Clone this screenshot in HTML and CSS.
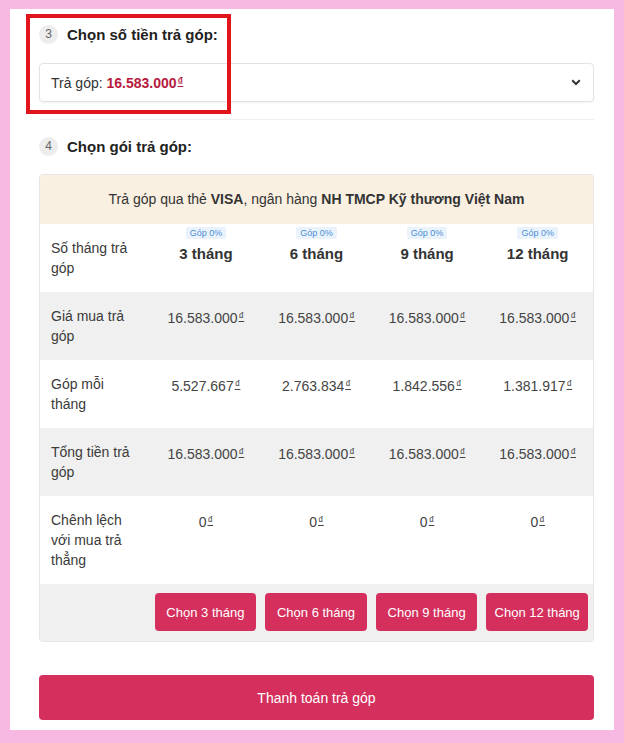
FILE: index.html
```html
<!DOCTYPE html>
<html lang="vi">
<head>
<meta charset="utf-8">
<link rel="stylesheet" href="styles.css">
</head>
<body>
<div class="panel">
  <div class="highlight"></div>
  <div class="step">
    <span class="num">3</span>
    <span class="step-title">Chọn số tiền trả góp:</span>
  </div>
  <div class="select">
    <span>Trả góp: <b class="amount">16.583.000<span class="cur">₫</span></b></span>
    <svg class="chev" width="10" height="7" viewBox="0 0 10 7"><path d="M1.2 1.3 L5 5 L8.8 1.3" fill="none" stroke="#333" stroke-width="2"/></svg>
  </div>
  <div class="sep"></div>
  <div class="step">
    <span class="num">4</span>
    <span class="step-title">Chọn gói trả góp:</span>
  </div>
  <div class="plan">
    <div class="plan-head">Trả góp qua thẻ <b>VISA</b>, ngân hàng <b>NH TMCP Kỹ thương Việt Nam</b></div>
    <div class="row">
      <div class="label">Số tháng trả góp</div>
      <div class="month"><span class="tag">Góp 0%</span><div class="m">3 tháng</div></div>
      <div class="month"><span class="tag">Góp 0%</span><div class="m">6 tháng</div></div>
      <div class="month"><span class="tag">Góp 0%</span><div class="m">9 tháng</div></div>
      <div class="month"><span class="tag">Góp 0%</span><div class="m">12 tháng</div></div>
    </div>
    <div class="row gray">
      <div class="label">Giá mua trả góp</div>
      <div class="val">16.583.000<span class="cur">₫</span></div>
      <div class="val">16.583.000<span class="cur">₫</span></div>
      <div class="val">16.583.000<span class="cur">₫</span></div>
      <div class="val">16.583.000<span class="cur">₫</span></div>
    </div>
    <div class="row">
      <div class="label">Góp mỗi tháng</div>
      <div class="val">5.527.667<span class="cur">₫</span></div>
      <div class="val">2.763.834<span class="cur">₫</span></div>
      <div class="val">1.842.556<span class="cur">₫</span></div>
      <div class="val">1.381.917<span class="cur">₫</span></div>
    </div>
    <div class="row gray">
      <div class="label">Tổng tiền trả góp</div>
      <div class="val">16.583.000<span class="cur">₫</span></div>
      <div class="val">16.583.000<span class="cur">₫</span></div>
      <div class="val">16.583.000<span class="cur">₫</span></div>
      <div class="val">16.583.000<span class="cur">₫</span></div>
    </div>
    <div class="row">
      <div class="label">Chênh lệch với mua trả thẳng</div>
      <div class="val">0<span class="cur">₫</span></div>
      <div class="val">0<span class="cur">₫</span></div>
      <div class="val">0<span class="cur">₫</span></div>
      <div class="val">0<span class="cur">₫</span></div>
    </div>
    <div class="row gray btn-row">
      <div></div>
      <div class="bcell"><button class="pick">Chọn 3 tháng</button></div>
      <div class="bcell"><button class="pick">Chọn 6 tháng</button></div>
      <div class="bcell"><button class="pick">Chọn 9 tháng</button></div>
      <div class="bcell"><button class="pick">Chọn 12 tháng</button></div>
    </div>
  </div>
  <button class="pay">Thanh toán trả góp</button>
</div>
</body>
</html>
```

FILE: styles.css
```css
html, body {
  margin: 0;
  padding: 0;
}
body {
  background: #f7b9e2;
  font-family: "Liberation Sans", Arial, sans-serif;
  color: #333;
  padding: 9px 10px 12px 10px;
  width: 604px;
}
.panel {
  position: relative;
  background: #fff;
  padding: 14px 20px 10px 29px;
  display: flex;
  flex-direction: column;
}
.highlight {
  position: absolute;
  left: 16px;
  top: 5px;
  width: 197px;
  height: 92px;
  border: 4px solid #e3151c;
  pointer-events: none;
}
.step {
  display: flex;
  align-items: center;
  gap: 9px;
  height: 22px;
}
.num {
  width: 19px;
  height: 19px;
  border-radius: 50%;
  background: #ededed;
  color: #666;
  font-size: 12px;
  display: flex;
  align-items: center;
  justify-content: center;
}
.step-title {
  font-weight: bold;
  font-size: 15px;
  color: #222;
}
.select {
  margin-top: 18px;
  height: 37px;
  border: 1px solid #e3e3e3;
  border-radius: 4px;
  box-shadow: 0 1px 2px rgba(0,0,0,0.06);
  display: flex;
  align-items: center;
  justify-content: space-between;
  padding: 0 12px 0 11px;
  font-size: 14px;
  color: #333;
}
.amount {
  color: #b71a3e;
}
.cur {
  font-size: 11px;
  vertical-align: 3px;
  text-decoration: underline;
  font-weight: normal;
  margin-left: 1px;
}
.amount .cur {
  font-weight: bold;
}
.sep {
  margin-top: 17px;
  border-top: 1px solid #efefef;
}
.sep + .step {
  margin-top: 15px;
}
.plan {
  margin-top: 17px;
  border: 1px solid #e6e6e6;
  border-radius: 4px;
  overflow: hidden;
}
.plan-head {
  background: #f9f0e2;
  height: 49px;
  line-height: 49px;
  text-align: center;
  font-size: 14px;
  color: #333;
}
.row {
  display: grid;
  grid-template-columns: repeat(5, 1fr);
  font-size: 14px;
  line-height: 20px;
}
.row.gray {
  background: #f0f0f0;
}
.label {
  padding: 14px 11px 14px 11px;
  color: #3a3a3a;
}
.val {
  padding: 14px 4px 14px 4px;
  text-align: center;
  color: #444;
}
.month {
  padding-top: 3px;
  display: flex;
  flex-direction: column;
  align-items: center;
}
.tag {
  font-size: 9px;
  line-height: 12px;
  color: #4a8fd4;
  background: #eaf3fc;
  padding: 0 4px;
  border-radius: 2px;
}
.m {
  margin-top: 5px;
  font-weight: bold;
  font-size: 15px;
  color: #333;
}
.btn-row {
  padding: 9px 0 10px 0;
}
.bcell {
  padding: 0 5px 0 4px;
}
.pick {
  width: 100%;
  height: 38px;
  border: none;
  border-radius: 4px;
  background: #d52f5d;
  color: #fff;
  font-family: "Liberation Sans", Arial, sans-serif;
  font-size: 13px;
  padding: 0;
}
.pay {
  margin-top: 33px;
  height: 45px;
  border: none;
  border-radius: 4px;
  background: #d52f5d;
  color: #fff;
  font-family: "Liberation Sans", Arial, sans-serif;
  font-size: 14px;
}
```
